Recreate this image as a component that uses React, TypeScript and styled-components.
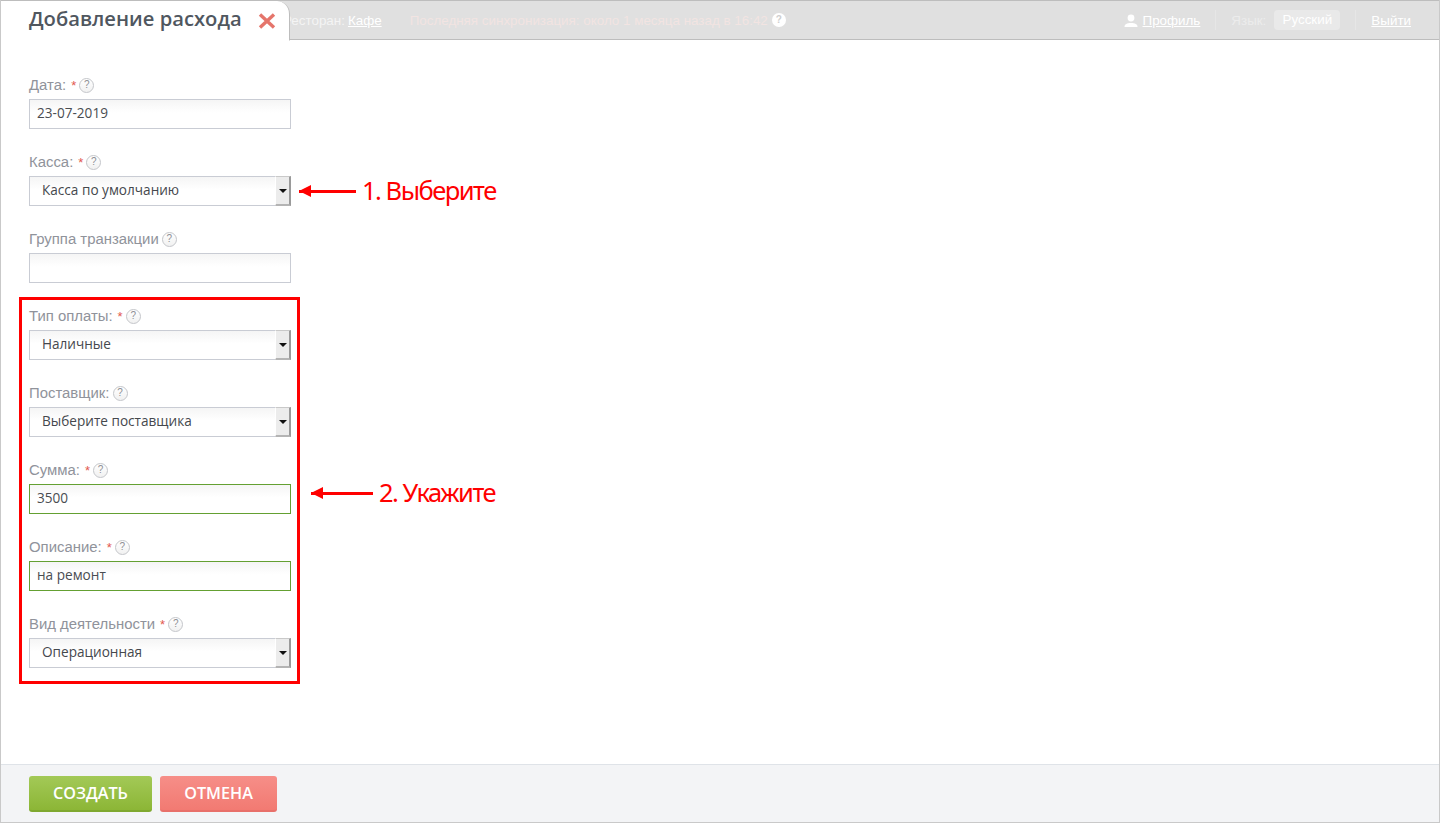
import React from "react";
import styled, { createGlobalStyle } from "styled-components";

const GlobalStyle = createGlobalStyle`
	* {
		box-sizing: border-box;
	}
	html,
	body {
		margin: 0;
		padding: 0;
		background: #fff;
		overflow: hidden;
	}
`;

const uiFont = `"Open Sans", "Noto Sans", sans-serif`;
const labelFont = `"Liberation Sans", Arial, sans-serif`;

type FieldProps = {
	label: string;
	required?: boolean;
	value?: string;
	kind?: "input" | "select";
	valid?: boolean;
	children?: React.ReactNode;
};

const Field = (props: FieldProps) => {
	return (
		<FieldBox>
			<LabelRow>
				<LabelText>{props.label}</LabelText>
				{props.required && <Star>*</Star>}
				<Help>?</Help>
			</LabelRow>
			{props.kind === "select" ? (
				<SelectBox>
					<SelectValue>{props.value}</SelectValue>
					<SelectButton>
						<Caret />
					</SelectButton>
				</SelectBox>
			) : (
				<TextBox $valid={props.valid}>{props.value}</TextBox>
			)}
			{props.children}
		</FieldBox>
	);
};

const App = () => {
	return (
		<Page>
			<GlobalStyle />
			<TopBar>
				<Tab>
					<TabTitle>Добавление расхода</TabTitle>
					<CloseIcon width="18" height="16" viewBox="0 0 18 16">
						<path d="M2 1.5 16 14.5M16 1.5 2 14.5" stroke="#e5756b" strokeWidth="3.4" fill="none" />
					</CloseIcon>
				</Tab>
				<BarLeft>
					<BarMuted>Ресторан:</BarMuted>
					<BarLink>Кафе</BarLink>
					<SyncText>Последняя синхронизация: около 1 месяца назад в 16:42</SyncText>
					<BarHelp>?</BarHelp>
				</BarLeft>
				<BarRight>
					<UserIcon width="14" height="13" viewBox="0 0 14 13">
						<circle cx="7" cy="4" r="3.4" fill="#fff" />
						<path d="M0.5 13c0-3 2.5-4 6.5-4s6.5 1 6.5 4z" fill="#fff" />
					</UserIcon>
					<BarLink>Профиль</BarLink>
					<BarDivider />
					<LangLabel>Язык:</LangLabel>
					<LangPill>Русский</LangPill>
					<BarDivider />
					<BarLink>Выйти</BarLink>
				</BarRight>
			</TopBar>
			<Content>
				<Field label="Дата:" required value="23-07-2019" />
				<Field label="Касса:" required kind="select" value="Касса по умолчанию">
					<Callout $left={270} $top={23}>
						<CalloutArrow $width={57} />
						<CalloutText>1. Выберите</CalloutText>
					</Callout>
				</Field>
				<Field label="Группа транзакции" />
				<Highlight>
					<Field label="Тип оплаты:" required kind="select" value="Наличные" />
					<Field label="Поставщик:" kind="select" value="Выберите поставщика" />
					<Field label="Сумма:" required value="3500" valid>
						<Callout $left={282} $top={17}>
							<CalloutArrow $width={62} />
							<CalloutText>2. Укажите</CalloutText>
						</Callout>
					</Field>
					<Field label="Описание:" required value="на ремонт" valid />
					<Field label="Вид деятельности" required kind="select" value="Операционная" />
				</Highlight>
			</Content>
			<Footer>
				<ActionButton $tone="green" $width={123}>Создать</ActionButton>
				<ActionButton $tone="red" $width={117}>Отмена</ActionButton>
			</Footer>
		</Page>
	);
};

const Page = styled.div`
	width: 1440px;
	height: 823px;
	display: flex;
	flex-direction: column;
	background: #fff;
	border-left: 1px solid #c9c9c9;
	border-right: 1px solid #c9c9c9;
	border-bottom: 1px solid #c9c9c9;
`;

const TopBar = styled.header`
	height: 40px;
	flex: none;
	display: flex;
	align-items: center;
	background: #e0e0e0;
	border-top: 1px solid #bdbdbd;
	border-bottom: 1px solid #bdbdbd;
	font-family: ${labelFont};
	font-size: 13.4px;
	padding-right: 28px;
`;

const Tab = styled.div`
	position: relative;
	z-index: 1;
	width: 289px;
	height: 40px;
	margin-top: 1px;
	flex: none;
	display: flex;
	align-items: center;
	padding: 0 0 4px 28px;
	background: #fff;
	border-right: 1px solid #bdbdbd;
	border-top-right-radius: 13px;
	border-bottom: 1px solid #fff;
`;

const TabTitle = styled.h1`
	margin: 0;
	font-family: ${uiFont};
	font-size: 20.2px;
	font-weight: 600;
	line-height: 28px;
	color: #50575f;
	white-space: nowrap;
`;

const CloseIcon = styled.svg`
	flex: none;
	margin: 5px 0 0 16px;
`;

const BarLeft = styled.div`
	display: flex;
	align-items: center;
	margin-left: -7px;
`;

const BarMuted = styled.span`
	color: #f4f4f4;
	margin-right: 3px;
`;

const BarLink = styled.a`
	color: #fff;
	text-decoration: underline;
`;

const SyncText = styled.span`
	color: #f2e4e2;
	margin-left: 28px;
`;

const BarHelp = styled.span`
	width: 14px;
	height: 14px;
	margin-left: 4px;
	border-radius: 50%;
	background: #fff;
	color: #cfcfcf;
	font-size: 10px;
	font-weight: 700;
	line-height: 14px;
	text-align: center;
`;

const BarRight = styled.div`
	display: flex;
	align-items: center;
	margin-left: auto;
`;

const UserIcon = styled.svg`
	flex: none;
	margin-right: 5px;
`;

const BarDivider = styled.span`
	width: 1px;
	height: 20px;
	margin: 0 15px;
	background: #e6e6e6;
`;

const LangLabel = styled.span`
	color: #ececec;
`;

const LangPill = styled.span`
	margin-left: 8px;
	width: 66px;
	height: 20px;
	border-radius: 4px;
	background: #e9e9e9;
	color: #fff;
	line-height: 20px;
	text-align: center;
`;

const Content = styled.main`
	flex: 1;
	display: flex;
	flex-direction: column;
	gap: 23px;
	padding: 35px 0 0 28px;
`;

const FieldBox = styled.div`
	position: relative;
	width: 262px;
	height: 54px;
`;

const LabelRow = styled.div`
	height: 20px;
	margin-bottom: 4px;
	display: flex;
	align-items: center;
	font-family: ${labelFont};
	font-size: 14.9px;
	color: #90939b;
`;

const LabelText = styled.span`
	white-space: nowrap;
`;

const Star = styled.span`
	margin-left: 5px;
	color: #e2584f;
	font-size: 13px;
	line-height: 14px;
	height: 12px;
`;

const Help = styled.span`
	width: 15px;
	height: 15px;
	margin-left: 3px;
	border-radius: 50%;
	border: 1.5px solid #c4c6ca;
	background: linear-gradient(#fff, #f1f1f1);
	color: #8d8f94;
	font-size: 10px;
	font-weight: 400;
	line-height: 12px;
	text-align: center;
`;

const TextBox = styled.div<{ $valid?: boolean }>`
	width: 262px;
	height: 30px;
	padding-left: 7px;
	border: 1px solid ${(props) => (props.$valid ? "#64a032" : "#c9ccd4")};
	background: linear-gradient(#f5f5f5, #fff 45%);
	font-family: ${uiFont};
	font-size: 13.6px;
	line-height: 26px;
	color: #4a4d52;
`;

const SelectBox = styled.div`
	width: 262px;
	height: 30px;
	display: flex;
	border: 1px solid #c9ccd4;
	border-right: none;
	background: linear-gradient(#f5f5f5, #fff 45%);
`;

const SelectValue = styled.span`
	flex: 1;
	padding-left: 12px;
	font-family: ${uiFont};
	font-size: 13.6px;
	line-height: 26px;
	color: #45484d;
`;

const SelectButton = styled.span`
	width: 16px;
	margin-top: -1px;
	margin-bottom: -1px;
	display: flex;
	align-items: center;
	justify-content: center;
	background: #ececec;
	border-left: 1px solid #fff;
	border-right: 2px solid #9a9a9a;
	border-top: 1px solid #c9c9c9;
	border-bottom: 2px solid #b4b4b4;
`;

const Caret = styled.span`
	width: 0;
	height: 0;
	border-left: 4px solid transparent;
	border-right: 4px solid transparent;
	border-top: 4px solid #111;
`;

const Highlight = styled.section`
	display: flex;
	flex-direction: column;
	gap: 23px;
	width: 281px;
	margin: -9px 0 0 -10px;
	padding: 6px 6px 13px 7px;
	border: 3px solid #ff0000;
`;

const Callout = styled.div<{ $left: number; $top: number }>`
	position: absolute;
	left: ${(props) => props.$left}px;
	top: ${(props) => props.$top}px;
	display: flex;
	align-items: center;
	gap: 6px;
	height: 32px;
	white-space: nowrap;
`;

const CalloutArrow = styled.span<{ $width: number }>`
	position: relative;
	width: ${(props) => props.$width}px;
	height: 3px;
	background: #ff0000;
	&::before {
		content: "";
		position: absolute;
		left: 0;
		top: -5px;
		border-top: 6.5px solid transparent;
		border-bottom: 6.5px solid transparent;
		border-right: 12px solid #ff0000;
	}
`;

const CalloutText = styled.span`
	font-family: "Noto Sans", "Open Sans", sans-serif;
	font-size: 25.5px;
	line-height: 32px;
	letter-spacing: -1.5px;
	margin-top: -3px;
	color: #ff0000;
`;

const Footer = styled.footer`
	height: 58px;
	flex: none;
	display: flex;
	gap: 8px;
	padding: 11px 0 0 28px;
	background: #f3f4f6;
	border-top: 1px solid #dfe3e8;
`;

const ActionButton = styled.button<{ $tone: "green" | "red"; $width: number }>`
	width: ${(props) => props.$width}px;
	height: 36px;
	padding: 0;
	border: none;
	border-radius: 3px;
	border-bottom: 2px solid ${(props) => (props.$tone === "green" ? "#7fa82f" : "#e8706a")};
	background: ${(props) =>
		props.$tone === "green"
			? "linear-gradient(#a3c957, #8cb636)"
			: "linear-gradient(#f68e88, #f27a72)"};
	font-family: ${uiFont};
	font-size: 16.2px;
	font-weight: 600;
	text-transform: uppercase;
	color: #fff;
`;

export default App;
